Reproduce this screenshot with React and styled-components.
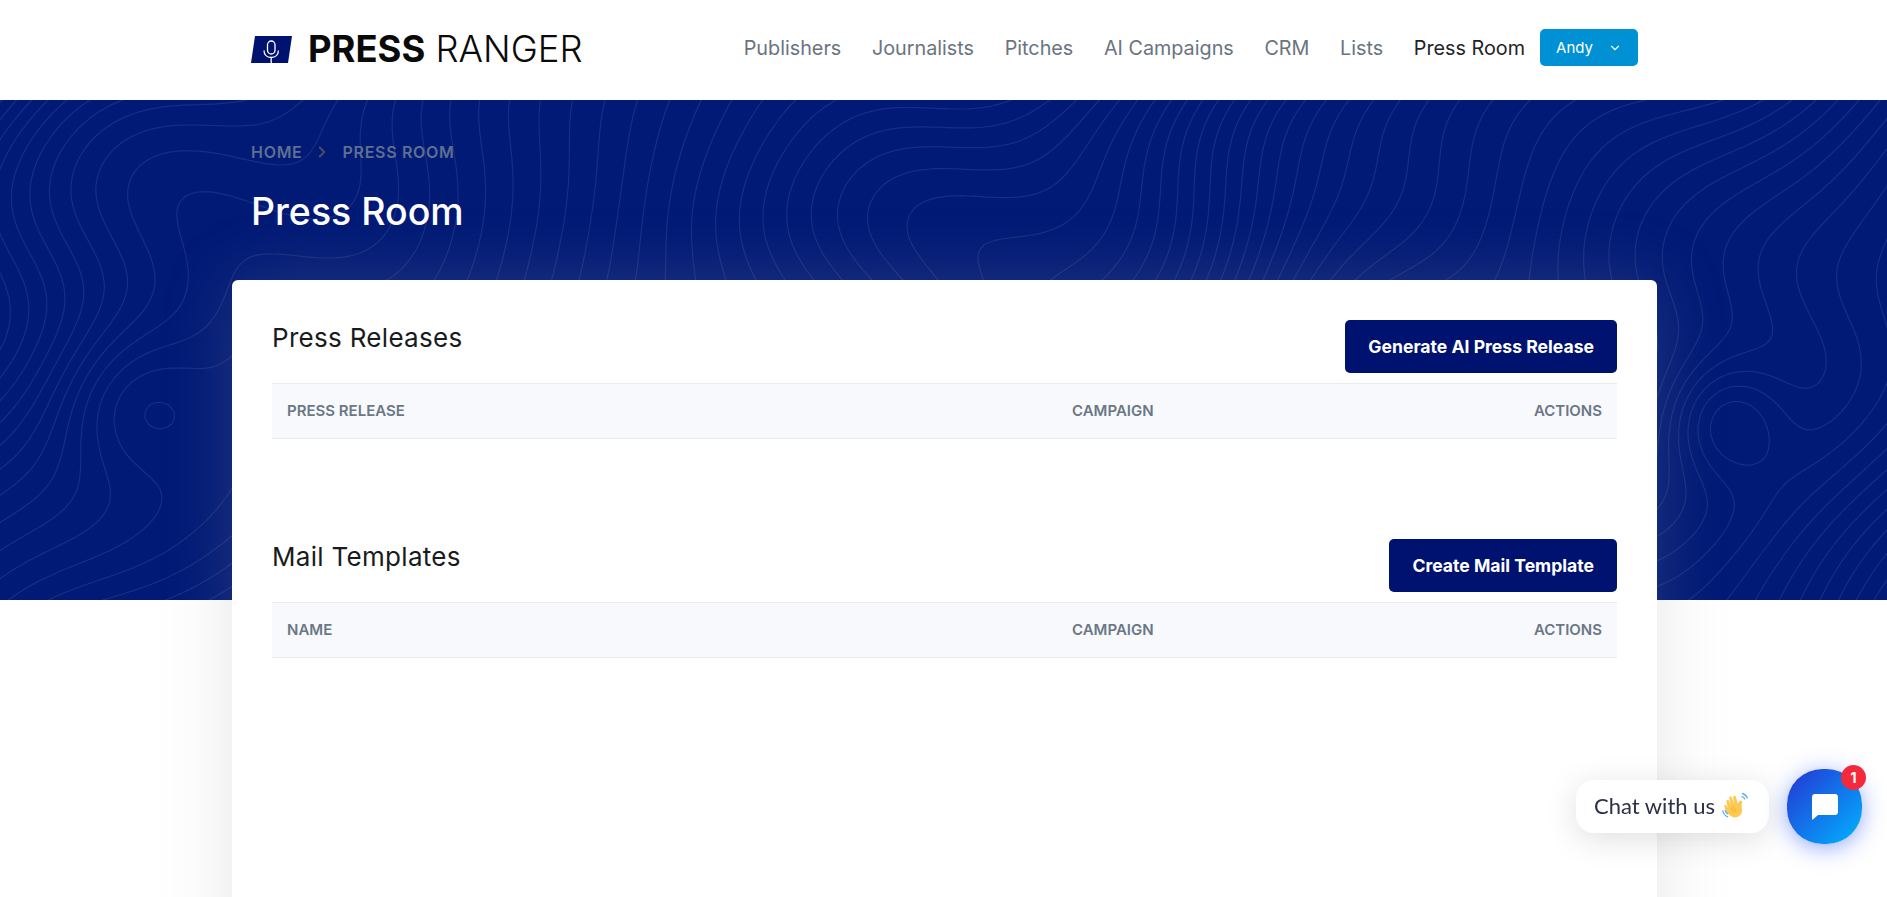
import { useMemo } from 'react';
import styled, { createGlobalStyle } from 'styled-components';
import { ChevronDown, ChevronRight } from 'lucide-react';

const GlobalStyle = createGlobalStyle`
  * {
    margin: 0;
    padding: 0;
    box-sizing: border-box;
  }
  html, body {
    height: 100%;
    overflow: hidden;
    background: #fff;
    font-family: 'Inter', 'Liberation Sans', sans-serif;
  }
`;

const Page = styled.div`
  height: 897px;
  overflow: hidden;
  background: #fff;
`;

const TopBar = styled.header`
  height: 100px;
  background: #fff;
  display: flex;
  align-items: center;
  justify-content: space-between;
  padding: 0 249px 5px 251px;
`;

const Logo = styled.div`
  display: flex;
  align-items: center;
  gap: 16px;
  padding-top: 4px;
`;

const LogoText = styled.div`
  font-size: 36.4px;
  line-height: 1;
  color: #0a0a0a;
  font-weight: 300;
  white-space: nowrap;

  b {
    font-weight: 700;
  }
`;

const Nav = styled.nav`
  display: flex;
  align-items: center;
  gap: 30.6px;
`;

const NavLink = styled.a`
  font-size: 19.8px;
  font-weight: 400;
  color: ${(p) => (p.$active ? '#1f2328' : '#69747f')};
  white-space: nowrap;
`;

const UserButton = styled.button`
  width: 98px;
  height: 37px;
  margin-left: -15.6px;
  border: 0;
  border-radius: 5px;
  background: #0091d5;
  color: #fff;
  font-family: inherit;
  font-size: 15px;
  font-weight: 400;
  display: flex;
  align-items: center;
  justify-content: center;
  gap: 15px;

  svg {
    width: 14px;
    height: 14px;
  }
`;

const Hero = styled.section`
  position: relative;
  height: 500px;
  background: #011a76;
  padding: 43px 251px 0;
  overflow: hidden;
`;

const Topo = styled.svg`
  position: absolute;
  inset: 0;
  width: 100%;
  height: 100%;
`;

const Breadcrumb = styled.div`
  position: relative;
  display: flex;
  align-items: center;
  gap: 11px;
  font-size: 16px;
  font-weight: 600;
  line-height: 18px;
  letter-spacing: 0.7px;
  color: #5f6f92;

  svg {
    width: 18px;
    height: 18px;
    stroke-width: 2.5;
    color: #454f68;
  }
`;

const PageTitle = styled.h1`
  position: relative;
  margin-top: 29px;
  font-size: 37.5px;
  font-weight: 500;
  line-height: 44px;
  color: #fff;
`;

const Card = styled.main`
  position: relative;
  width: 1425px;
  min-height: 700px;
  margin: -320px 0 0 232px;
  padding: 40px;
  background: #fff;
  border-radius: 6px;
  box-shadow: 0 0 70px rgba(146, 150, 160, 0.24);
`;

const Section = styled.section`
  margin-bottom: 100px;
`;

const SectionHead = styled.div`
  display: flex;
  align-items: flex-start;
  justify-content: space-between;
  margin-bottom: 10px;
`;

const SectionTitle = styled.h2`
  font-size: 26px;
  font-weight: 400;
  line-height: 36px;
  letter-spacing: 0.3px;
  color: #181c20;
`;

const PrimaryButton = styled.button`
  height: 53px;
  padding: 0 23px;
  border: 0;
  border-radius: 5px;
  background: #00126f;
  color: #fff;
  font-family: inherit;
  font-size: 17.6px;
  font-weight: 700;
`;

const TableHead = styled.div`
  display: grid;
  grid-template-columns: 785px 1fr auto;
  align-items: center;
  height: 56px;
  padding: 0 15px 1px;
  background: #f8f9fc;
  border-top: 1px solid #e9ebee;
  border-bottom: 1px solid #e9ebee;
  font-size: 15px;
  font-weight: 600;
  color: #6b7785;
`;

const ChatBubble = styled.div`
  position: fixed;
  left: 1576px;
  top: 780px;
  width: 193px;
  height: 53px;
  border-radius: 18px;
  background: #fff;
  box-shadow: 0 6px 32px rgba(0, 0, 0, 0.13);
  display: flex;
  align-items: center;
  gap: 7px;
  padding: 0 0 2px 18px;
  font-family: 'Lato', 'Open Sans', sans-serif;
  font-size: 22px;
  color: #2c3049;
  white-space: nowrap;
`;

const ChatLauncher = styled.div`
  position: fixed;
  left: 1787px;
  top: 769px;
  width: 75px;
  height: 75px;
  border-radius: 47%;
  background: linear-gradient(135deg, #2435d4 0%, #00b4ff 100%);
  box-shadow: 0 4px 22px rgba(45, 85, 255, 0.5);
  display: flex;
  align-items: center;
  justify-content: center;
`;

const ChatBadge = styled.span`
  position: absolute;
  top: -4px;
  right: -4px;
  width: 25px;
  height: 25px;
  border-radius: 50%;
  background: #f42a3c;
  color: #fff;
  font-size: 14px;
  font-weight: 700;
  display: flex;
  align-items: center;
  justify-content: center;
`;

// height field for the map lines in the hero
function height(x, y) {
  const wx = x + 60 * Math.sin(y / 83 + 1.2) + 20 * Math.sin(y / 47 + x / 160);
  const wy = y + 50 * Math.sin(x / 101 + 0.4) + 16 * Math.sin(x / 61 - y / 110);
  let h = (wx * 0.8 + wy * 0.72) / 25;
  h += 1.7 * Math.sin(wx / 230 + wy / 150);
  h += 1.1 * Math.sin(wx / 130 - wy / 95 + 2);
  h += 6 * Math.exp(-((x - 1722) ** 2 + (y - 320) ** 2) / 4200);
  h += 4 * Math.exp(-((x - 130) ** 2 + (y - 300) ** 2) / 6000);
  return h;
}

// plain marching squares, one level per integer value of the field
function buildContours(w, h, step) {
  const cols = Math.ceil(w / step) + 1;
  const rows = Math.ceil(h / step) + 1;
  const grid = [];
  for (let r = 0; r <= rows; r++) {
    const row = [];
    for (let c = 0; c <= cols; c++) row.push(height(c * step, r * step));
    grid.push(row);
  }
  const out = [];
  const edge = (x1, y1, v1, x2, y2, v2, l) => {
    const t = (l - v1) / (v2 - v1);
    return `${(x1 + (x2 - x1) * t).toFixed(1)} ${(y1 + (y2 - y1) * t).toFixed(1)}`;
  };
  for (let r = 0; r < rows; r++) {
    for (let c = 0; c < cols; c++) {
      const a = grid[r][c];
      const b = grid[r][c + 1];
      const d = grid[r + 1][c];
      const e = grid[r + 1][c + 1];
      const lo = Math.ceil(Math.min(a, b, d, e));
      const hi = Math.floor(Math.max(a, b, d, e));
      const x = c * step;
      const y = r * step;
      for (let l = lo; l <= hi; l++) {
        const pts = [];
        if (a < l !== b < l) pts.push(edge(x, y, a, x + step, y, b, l));
        if (b < l !== e < l) pts.push(edge(x + step, y, b, x + step, y + step, e, l));
        if (e < l !== d < l) pts.push(edge(x + step, y + step, e, x, y + step, d, l));
        if (d < l !== a < l) pts.push(edge(x, y + step, d, x, y, a, l));
        if (pts.length >= 2) out.push(`M${pts[0]}L${pts[1]}`);
        if (pts.length === 4) out.push(`M${pts[2]}L${pts[3]}`);
      }
    }
  }
  return out.join('');
}

function TopoLines() {
  const d = useMemo(() => buildContours(1887, 500, 6), []);
  return (
    <Topo viewBox='0 0 1887 500' preserveAspectRatio='none' aria-hidden='true'>
      <path d={d} fill='none' stroke='#ffffff' strokeOpacity='0.09' strokeWidth='1.2' strokeLinecap='round' />
    </Topo>
  );
}

function LogoMark() {
  return (
    <svg width='41' height='27' viewBox='0 0 41 27' aria-hidden='true'>
      <path d='M4 0H41L37 27H0Z' fill='#00126f' />
      <rect x='16.5' y='5' width='7.5' height='13' rx='3.75' fill='none' stroke='#fff' strokeWidth='1.3' />
      <path d='M13 14.5c0 4.400 3 7 7.200 7s7.200-2.600 7.200-7M20.200 21.500V27' fill='none' stroke='#fff' strokeWidth='1.3' />
    </svg>
  );
}

function WaveHand() {
  return (
    <svg width='27' height='27' viewBox='0 0 27 27' aria-hidden='true'>
      <path
        d='M8.500 23.500 C5 21.500 3.500 19 2.500 16 C2 14.500 3.800 13.800 4.700 15 L6.200 17 L3.800 10.500 C3.300 8.800 5.500 8 6.300 9.600 L8.600 14.200 L6.300 7 C5.800 5.300 8 4.500 8.800 6.100 L11.600 12.200 L10 5.500 C9.600 3.800 11.900 3.200 12.600 4.800 L15.300 11.500 L17 8.400 C17.900 6.900 20 7.700 19.600 9.300 C19 12.500 20 15 20.500 17 C21.200 20 19.500 23.500 16 25 C13.500 26 10.800 25 8.500 23.500Z'
        fill='#fdc94f'
        transform='rotate(8 13 14)'
      />
      <path d='M11 14l3 6M8.800 15.500l3 5' stroke='#e8a92e' strokeWidth='0.7' fill='none' />
      <path d='M20.500 1.500c2.200.600 4 2.300 4.800 4.500M20 4.500c1.200.400 2.200 1.300 2.700 2.500M.8 19c.5 2.600 2.300 4.800 4.800 5.700M3.200 18.700c.3 1.300 1.200 2.400 2.400 3' fill='none' stroke='#5dadec' strokeWidth='1.300' strokeLinecap='round' />
    </svg>
  );
}

function ChatIcon() {
  return (
    <svg width='26' height='26' viewBox='0 0 26 26' aria-hidden='true'>
      <path d='M3 0H23C24.700 0 26 1.300 26 3V18C26 19.700 24.700 21 23 21H6L1 25.500C.6 25.800 0 25.500 0 25V3C0 1.300 1.300 0 3 0Z' fill='#fff' />
    </svg>
  );
}

const navItems = ['Publishers', 'Journalists', 'Pitches', 'AI Campaigns', 'CRM', 'Lists'];

function DataSection({ title, action, firstColumn }) {
  return (
    <Section>
      <SectionHead>
        <SectionTitle>{title}</SectionTitle>
        <PrimaryButton>{action}</PrimaryButton>
      </SectionHead>
      <TableHead>
        <span>{firstColumn}</span>
        <span>CAMPAIGN</span>
        <span>ACTIONS</span>
      </TableHead>
    </Section>
  );
}

export default function App() {
  return (
    <Page>
      <GlobalStyle />
      <TopBar>
        <Logo>
          <LogoMark />
          <LogoText>
            <b>PRESS</b> RANGER
          </LogoText>
        </Logo>
        <Nav>
          {navItems.map((item) => (
            <NavLink key={item}>{item}</NavLink>
          ))}
          <NavLink $active>Press Room</NavLink>
          <UserButton>
            Andy <ChevronDown />
          </UserButton>
        </Nav>
      </TopBar>
      <Hero>
        <TopoLines />
        <Breadcrumb>
          <span>HOME</span>
          <ChevronRight />
          <span>PRESS ROOM</span>
        </Breadcrumb>
        <PageTitle>Press Room</PageTitle>
      </Hero>
      <Card>
        <DataSection title='Press Releases' action='Generate AI Press Release' firstColumn='PRESS RELEASE' />
        <DataSection title='Mail Templates' action='Create Mail Template' firstColumn='NAME' />
      </Card>
      <ChatBubble>
        Chat with us <WaveHand />
      </ChatBubble>
      <ChatLauncher>
        <ChatIcon />
        <ChatBadge>1</ChatBadge>
      </ChatLauncher>
    </Page>
  );
}
